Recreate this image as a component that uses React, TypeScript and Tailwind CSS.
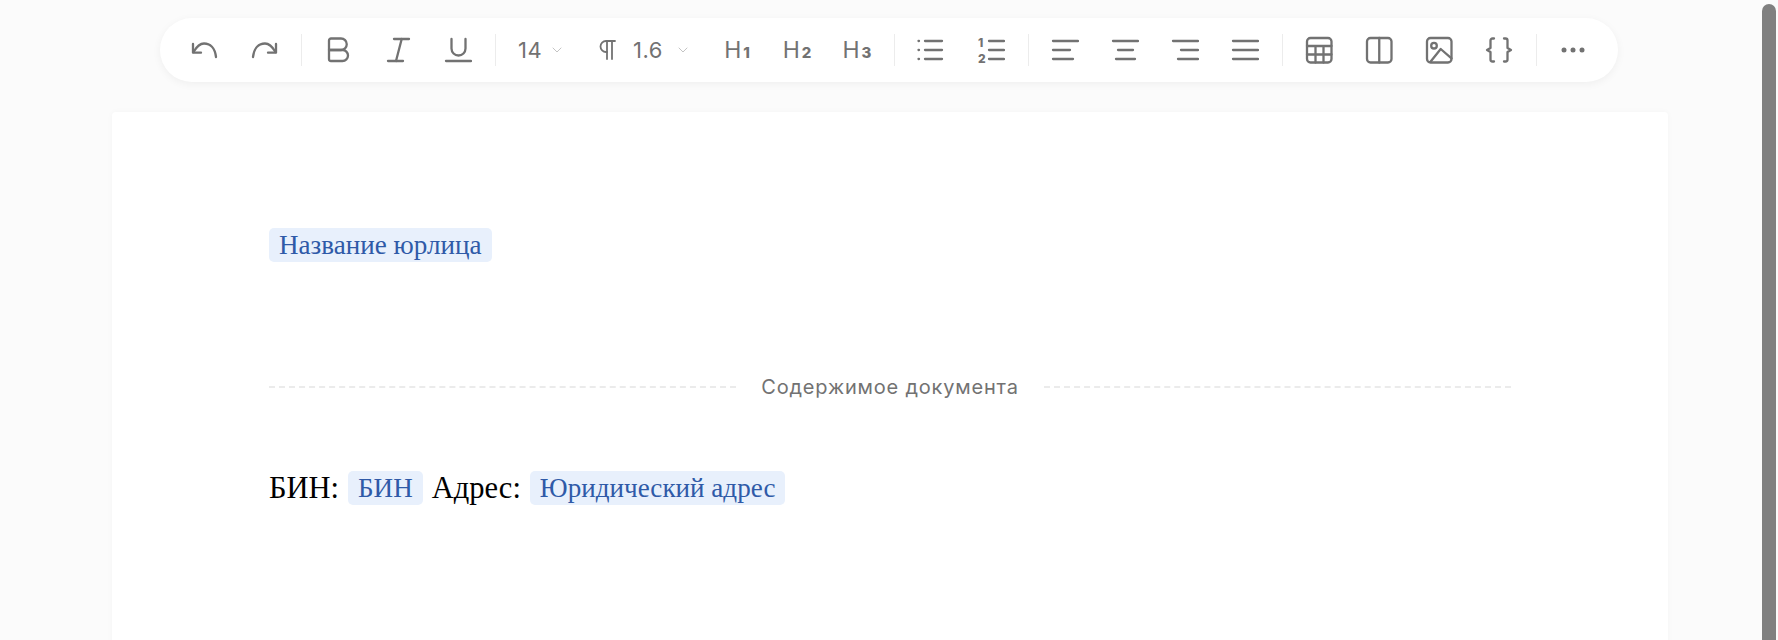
import React from 'react';
import { ChevronDown } from 'lucide-react';

const Ico = ({ children }: { children: React.ReactNode }) => (
  <svg width="28" height="28" viewBox="0 0 28 28" fill="none" stroke="currentColor" strokeWidth="2.3" strokeLinecap="round" strokeLinejoin="round">
    {children}
  </svg>
);

const Btn = ({ children }: { children: React.ReactNode }) => (
  <button className="flex h-[40px] w-[60px] shrink-0 items-center justify-center text-[#727272]">{children}</button>
);

const Sep = () => <div className="mx-[6.5px] h-[32px] w-px shrink-0 bg-[#ececec]" />;

const Heading = ({ n }: { n: string }) => (
  <Btn>
    <span className="flex items-baseline font-['Inter',sans-serif] leading-none">
      <span className="text-[23px] font-normal">H</span>
      <span className="ml-[2px] text-[15px] font-extrabold">{n}</span>
    </span>
  </Btn>
);

const Tag = ({ children }: { children: React.ReactNode }) => (
  <span className="inline-block h-[34px] rounded-[5px] bg-[#e8f0fc] px-[10px] text-[27.1px] leading-[34px] text-[#2f5aa8]">{children}</span>
);

export default function App() {
  return (
    <div className="relative h-[640px] overflow-hidden bg-[#fbfbfb]">
      <div className="flex justify-center pt-[18px]">
        <div className="flex h-[64px] w-[1458px] items-center rounded-[32px] bg-white pl-[14px] shadow-[0_2px_8px_rgba(0,0,0,0.05)]">
          <Btn><Ico><path d="M3 8v8.700h8" /><path d="M3.500 16C7 10 10.500 7.500 14 7.500c6 0 11 4.500 12 13.500" /></Ico></Btn>
          <Btn><Ico><path d="M26 8v8.700h-8" /><path d="M25.500 16C22 10 18.500 7.500 15 7.500c-6 0-11 4.500-12 13.500" /></Ico></Btn>
          <Sep />
          <Btn><Ico><path d="M7 2.500h10a5.750 5.750 0 0 1 0 11.500H5V4.500a2 2 0 0 1 2-2z" /><path d="M5 14h13.500a5.500 5.500 0 0 1 0 11H7a2 2 0 0 1-2-2z" /></Ico></Btn>
          <Btn><Ico><path d="M10 3h15" /><path d="M4 25h15" /><path d="M17.700 3L12 25" /></Ico></Btn>
          <Btn><Ico><path d="M7.500 3v9.500a7 7 0 0 0 14 0V3" /><path d="M2 25h25" /></Ico></Btn>
          <Sep />
          <div className="flex h-[40px] w-[205px] shrink-0 items-center pl-[16px] font-['Inter',sans-serif] text-[22px] tracking-[0.5px] text-[#727272]">
            <span className="w-[28px]">14</span>
            <ChevronDown className="ml-[3px] h-[16px] w-[16px] text-[#c4c4c4]" strokeWidth={1.5} />
            <span className="ml-[32px] flex w-[22px] justify-center">
              <svg width="20" height="22" viewBox="0 0 20 22" fill="none" stroke="currentColor" strokeWidth="1.800" strokeLinecap="round"><path d="M9 2v18" /><path d="M14 2v18" /><path d="M17 2H8a5.500 5.500 0 0 0 0 11h1" /></svg>
            </span>
            <span className="ml-[14px] w-[36px]">1.6</span>
            <ChevronDown className="ml-[6px] h-[16px] w-[16px] text-[#c4c4c4]" strokeWidth={1.5} />
          </div>
          <Heading n="1" />
          <Heading n="2" />
          <Heading n="3" />
          <Sep />
          <Btn><Ico><path d="M8 5h17M8 14h17M8 23h17" /><path d="M1.500 5h.5M1.500 14h.5M1.500 23h.5" /></Ico></Btn>
          <Btn>
            <Ico>
              <path d="M12 5h15M12 14h15M12 23h15" />
              <text x="1" y="11" fontSize="12" fontWeight="800" fill="currentColor" stroke="none" fontFamily="Inter, sans-serif">1</text>
              <text x="1" y="26.500" fontSize="12" fontWeight="800" fill="currentColor" stroke="none" fontFamily="Inter, sans-serif">2</text>
            </Ico>
          </Btn>
          <Sep />
          <Btn><Ico><path d="M2 5h25M2 14h17M2 23h20" /></Ico></Btn>
          <Btn><Ico><path d="M2 5h25M7 14h15M5 23h19" /></Ico></Btn>
          <Btn><Ico><path d="M2 5h25M10 14h17M7 23h20" /></Ico></Btn>
          <Btn><Ico><path d="M2 5h25M2 14h25M2 23h25" /></Ico></Btn>
          <Sep />
          <Btn><Ico><rect x="2" y="2" width="24.500" height="24.500" rx="3.500" /><path d="M2 10h24.500M2 18.500h24.500M10.500 10v16.500M18.500 10v16.500" /></Ico></Btn>
          <Btn><Ico><rect x="2" y="2" width="24.500" height="24.500" rx="3.500" /><path d="M14.250 2v24.500" /></Ico></Btn>
          <Btn><Ico><rect x="2" y="2" width="24.500" height="24.500" rx="3.500" /><circle cx="9" cy="9.700" r="2.800" /><path d="M5.700 25.500L15.700 13l10.800 9.300" /></Ico></Btn>
          <Btn><Ico><path d="M9 2.500H7.500a2 2 0 0 0-2 2V12L2 14l3.500 2v7.500a2 2 0 0 0 2 2H9" /><path d="M19 2.500h1.500a2 2 0 0 1 2 2V12l3.500 2-3.500 2v7.500a2 2 0 0 1-2 2H19" /></Ico></Btn>
          <Sep />
          <Btn><svg width="26" height="8" viewBox="0 0 26 8" fill="currentColor"><circle cx="4" cy="4" r="2.500" /><circle cx="13" cy="4" r="2.500" /><circle cx="22" cy="4" r="2.500" /></svg></Btn>
        </div>
      </div>

      <div className="mt-[30px] ml-[112px] h-[600px] w-[1556px] rounded-t-[4px] bg-white px-[157px] pt-[110px] font-['Liberation_Serif',serif] text-[30.5px] text-black shadow-[0_0_6px_rgba(0,0,0,0.03)]">
        <div className="h-[34px]"><Tag>Название юрлица</Tag></div>
        <div className="mt-[115px] flex h-[32px] items-center gap-[25px]">
          <div className="flex-1 border-t-2 border-dashed border-[#ebebeb]" />
          <span className="font-['Inter',sans-serif] text-[20px] tracking-[0.8px] text-[#727272]">Содержимое документа</span>
          <div className="flex-1 border-t-2 border-dashed border-[#ebebeb]" />
        </div>
        <div className="mt-[68px] flex h-[34px] items-center gap-[9px] leading-[34px]">
          <span>БИН:</span>
          <Tag>БИН</Tag>
          <span>Адрес:</span>
          <Tag>Юридический адрес</Tag>
        </div>
      </div>

      <div className="absolute top-[4px] right-[2px] bottom-0 w-[14px] rounded-t-[7px] bg-[#808080]" />
    </div>
  );
}
